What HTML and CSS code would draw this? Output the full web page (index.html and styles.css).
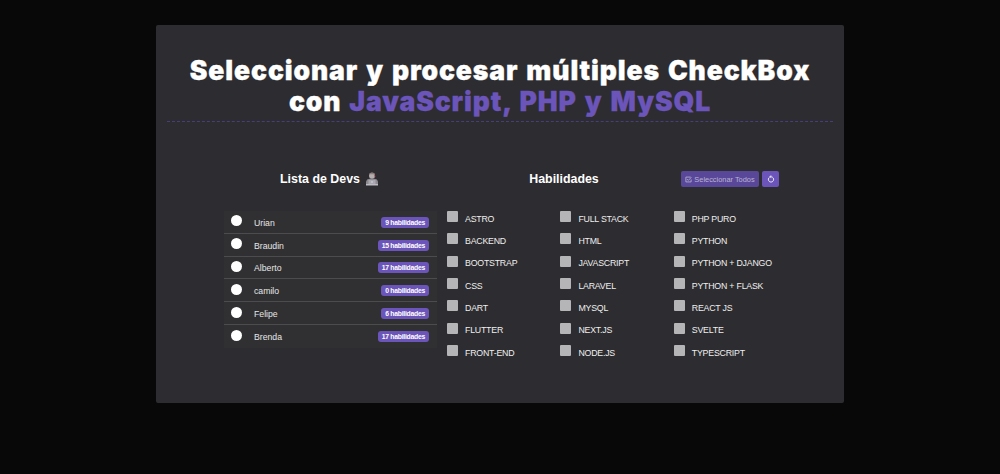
FILE: index.html
```html
<!DOCTYPE html>
<html lang="es">
<head>
<meta charset="utf-8">
<title>Seleccionar y procesar múltiples CheckBox</title>
<link rel="stylesheet" href="styles.css">
</head>
<body>
<main class="card">
  <h1 class="title"><span class="line line-one">Seleccionar y procesar múltiples CheckBox</span><span class="line line-two">con <span class="accent">JavaScript, PHP y MySQL</span></span></h1>
  <div class="columns">
    <section class="devs">
      <h2 class="heading">Lista de Devs
        <svg class="dev-icon" viewBox="0 0 14 14"><path d="M1 13V9.5Q1.500 7 4.500 6.800H9.500Q12.500 7 13 9.500V13Z" fill="#8d8990"/><circle cx="7" cy="3.800" r="3" fill="#b5aeb0"/><path d="M4 3.500Q4 .6 7 .6T10 3.500L9 2.300H5Z" fill="#8b7d7b"/><path d="M9.300 2.500l.8 2.500" stroke="#a74a50" stroke-width=".8"/><path d="M3.500 8H10.500V12.200H3.500Z" fill="#aaa9b2"/><path d="M1 12H13V13.500H1Z" fill="#bcbac2"/><circle cx="7" cy="10" r=".7" fill="#e7e5eb"/></svg>
      </h2>
      <ul class="dev-list">
        <li class="dev"><span class="radio"></span><span class="name">Urian</span><span class="badge">9 habilidades</span></li>
        <li class="dev"><span class="radio"></span><span class="name">Braudin</span><span class="badge">15 habilidades</span></li>
        <li class="dev"><span class="radio"></span><span class="name">Alberto</span><span class="badge">17 habilidades</span></li>
        <li class="dev"><span class="radio"></span><span class="name">camilo</span><span class="badge">0 habilidades</span></li>
        <li class="dev"><span class="radio"></span><span class="name">Felipe</span><span class="badge">6 habilidades</span></li>
        <li class="dev"><span class="radio"></span><span class="name">Brenda</span><span class="badge">17 habilidades</span></li>
      </ul>
    </section>
    <section class="skills">
      <div class="toolbar">
        <h2 class="heading skills-heading">Habilidades</h2>
        <div class="buttons">
          <button class="btn btn-all" disabled><svg class="check-icon" viewBox="0 0 16 16" fill="none" stroke="currentColor" stroke-width="1.900"><path d="M14 8v5.500H2v-11h11M4.500 7l3 3 7-7"/></svg>Seleccionar Todos</button>
          <button class="btn btn-reset" aria-label="Reiniciar"><svg class="reset-icon" viewBox="0 0 16 16" fill="none" stroke="currentColor" stroke-width="2"><path d="M5.300 4.300a5.300 5.300 0 1 0 5.400 0M8 3.500a5.300 5.300 0 0 1 2.700.8"/><path d="M8.500 0v6.400L4.500 3.300Z" fill="currentColor" stroke="none"/></svg></button>
        </div>
      </div>
      <div class="skill-grid">
        <label class="skill"><span class="box"></span><span>ASTRO</span></label>
        <label class="skill"><span class="box"></span><span>BACKEND</span></label>
        <label class="skill"><span class="box"></span><span>BOOTSTRAP</span></label>
        <label class="skill"><span class="box"></span><span>CSS</span></label>
        <label class="skill"><span class="box"></span><span>DART</span></label>
        <label class="skill"><span class="box"></span><span>FLUTTER</span></label>
        <label class="skill"><span class="box"></span><span>FRONT-END</span></label>
        <label class="skill"><span class="box"></span><span>FULL STACK</span></label>
        <label class="skill"><span class="box"></span><span>HTML</span></label>
        <label class="skill"><span class="box"></span><span>JAVASCRIPT</span></label>
        <label class="skill"><span class="box"></span><span>LARAVEL</span></label>
        <label class="skill"><span class="box"></span><span>MYSQL</span></label>
        <label class="skill"><span class="box"></span><span>NEXT.JS</span></label>
        <label class="skill"><span class="box"></span><span>NODE.JS</span></label>
        <label class="skill"><span class="box"></span><span>PHP PURO</span></label>
        <label class="skill"><span class="box"></span><span>PYTHON</span></label>
        <label class="skill"><span class="box"></span><span>PYTHON + DJANGO</span></label>
        <label class="skill"><span class="box"></span><span>PYTHON + FLASK</span></label>
        <label class="skill"><span class="box"></span><span>REACT JS</span></label>
        <label class="skill"><span class="box"></span><span>SVELTE</span></label>
        <label class="skill"><span class="box"></span><span>TYPESCRIPT</span></label>
      </div>
    </section>
  </div>
</main>
</body>
</html>
```
FILE: styles.css
```css
* { box-sizing: border-box; }
body {
  margin: 0;
  padding-top: 25px;
  height: 474px;
  background: #080808;
  color: #fff;
  font-family: "Liberation Sans", Arial, sans-serif;
}
.card {
  width: 688px;
  height: 378px;
  margin: 0 auto;
  padding: 30px 11px 0;
  background: #2d2c30;
  border-radius: 2px;
}
.title {
  height: 67px;
  margin: 0;
  border-bottom: 1px dashed #463e78;
  font-family: "Arial Black", Inter, sans-serif;
  font-size: 26.500px;
  line-height: 31px;
  font-weight: 900;
  letter-spacing: .9px;
  word-spacing: 1.800px;
  text-align: center;
  -webkit-text-stroke: .3px currentColor;
}
.line { display: block; white-space: nowrap; }
.accent { color: #6c55ba; }
.columns {
  display: grid;
  grid-template-columns: 213px 1fr;
  column-gap: 10px;
  padding: 42px 0 0 57px;
}
.heading {
  display: flex;
  align-items: center;
  justify-content: center;
  gap: 5px;
  height: 29px;
  margin: 0;
  font-size: 12.400px;
  font-weight: 700;
}
.devs .heading { padding-right: 2px; }
.dev-icon { width: 14px; height: 14px; }
.dev-list {
  list-style: none;
  margin: 18px 0 0;
  padding: 0;
  background: #303032;
}
.dev {
  display: flex;
  align-items: center;
  height: 22.8px;
  padding: 0 8px;
  border-bottom: 1px solid #4c4c4e;
}
.dev:last-child { border-bottom: 0; }
.radio {
  width: 11px;
  height: 11px;
  margin: -2px 11px 0 -1px;
  border-radius: 50%;
  background: #fff;
}
.name { flex: 1; padding: 2px 0 0 1px; font-size: 8.700px; color: #e6e6e6; }
.badge {
  height: 11px;
  margin-top: 1px;
  padding: 0 4px;
  border-radius: 3px;
  background: #6c55ba;
  font-size: 6.8px;
  letter-spacing: -.25px;
  line-height: 11px;
  font-weight: 700;
}
.toolbar { display: flex; height: 29px; }
.skills-heading { width: 234px; }
.buttons { display: flex; gap: 3px; padding-top: 7px; }
.btn {
  display: flex;
  align-items: center;
  justify-content: center;
  height: 16px;
  padding: 0;
  border: 0;
  border-radius: 2px;
  background: #6c55ba;
  color: #e4e0f0;
  font-family: inherit;
  font-size: 7.400px;
}
.btn-all { width: 78px; gap: 2px; background: #59489a; color: #b9b2d1; }
.btn-reset { width: 17px; }
.check-icon { width: 7px; height: 7px; }
.reset-icon { width: 8px; height: 8px; }
.skill-grid {
  display: grid;
  grid-template-rows: repeat(7, 22.350px);
  grid-template-columns: repeat(3, 113.400px);
  grid-auto-flow: column;
  margin-top: 18px;
}
.skill {
  display: flex;
  align-items: flex-start;
  gap: 7px;
  font-size: 8.800px;
  letter-spacing: -.22px;
  line-height: 10px;
  color: #efefef;
  white-space: nowrap;
}
.skill span:last-child { padding-top: 2.500px; }
.box {
  width: 11px;
  height: 11px;
  border-radius: 1px;
  background: #b5b4b6;
}
```
